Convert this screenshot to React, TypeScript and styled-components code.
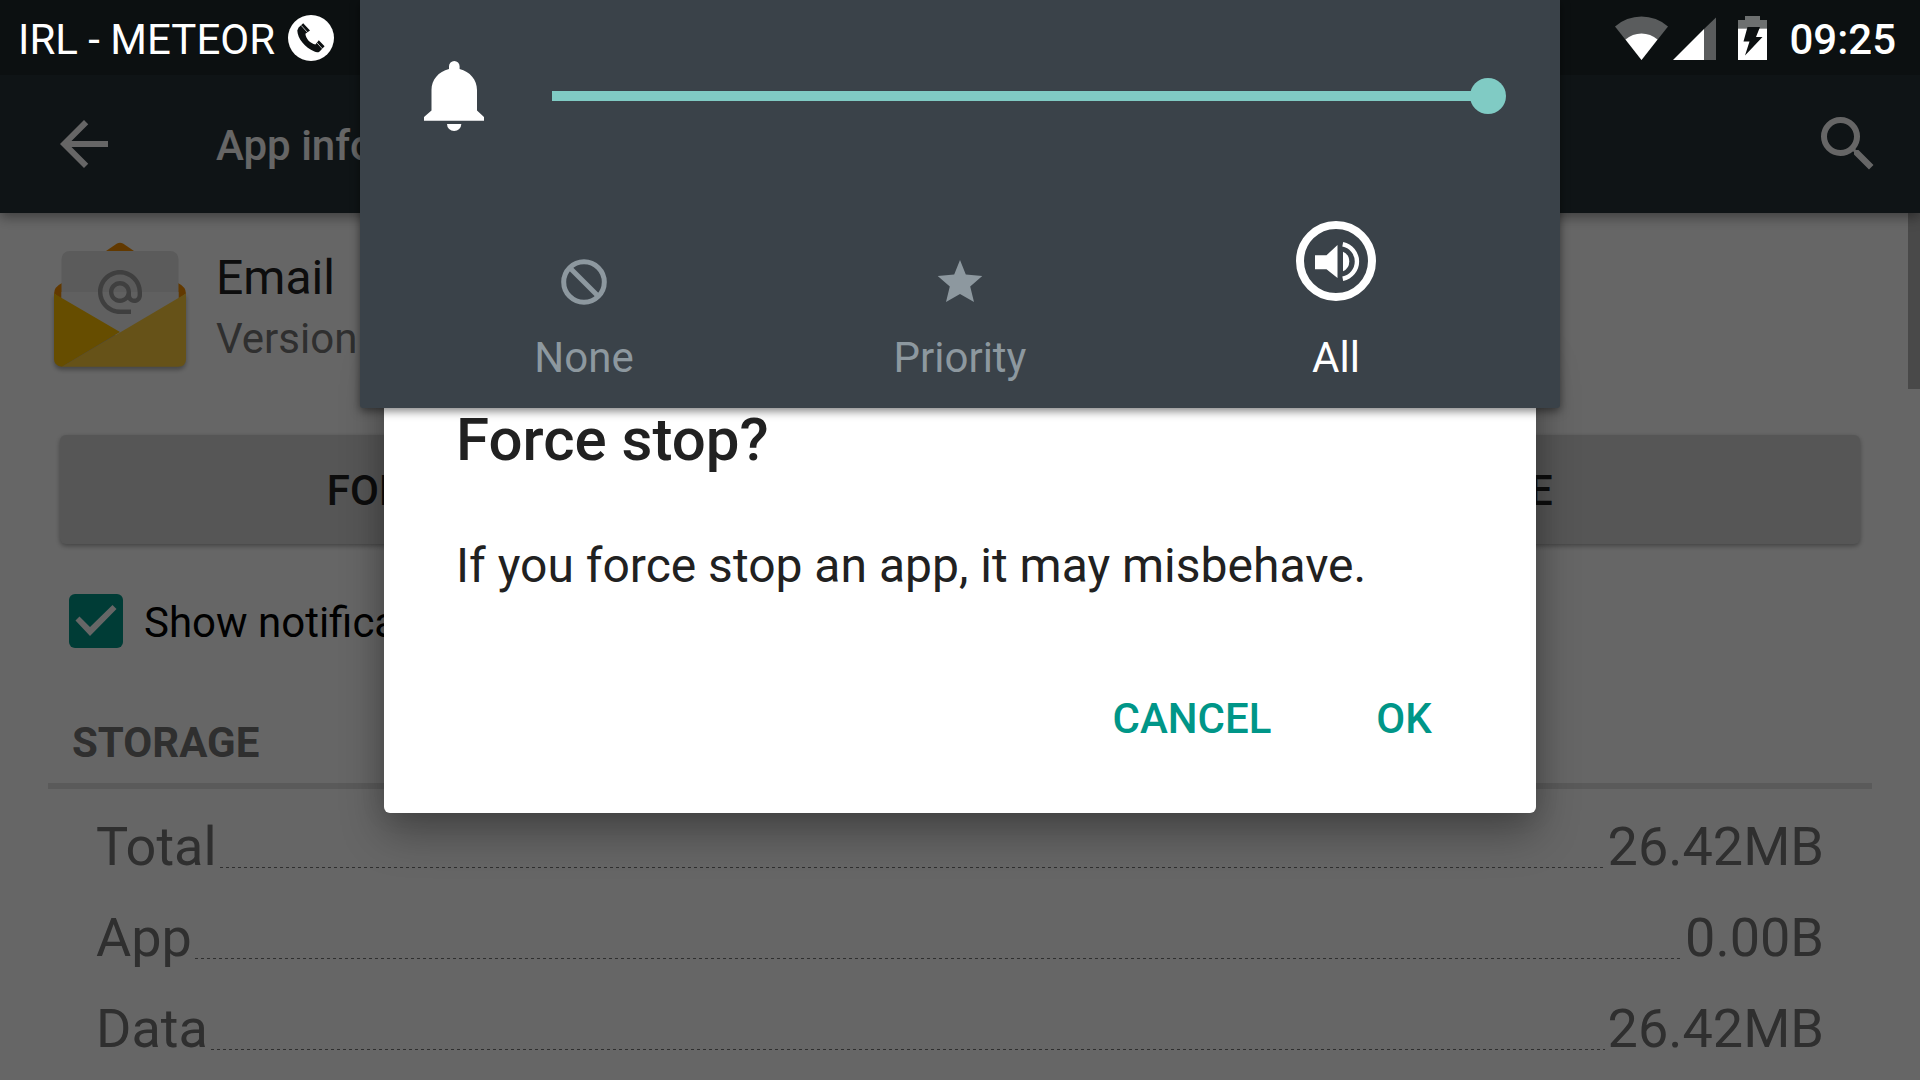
import React, { useState } from 'react';
import styled, { createGlobalStyle } from 'styled-components';

const GlobalStyle = createGlobalStyle`
  *, *::before, *::after { box-sizing: border-box; }
  body {
    margin: 0;
    background: #fff;
    color: #212121;
    font-family: Roboto, "Noto Sans", sans-serif;
    font-size: 42px;
    line-height: 49px;
  }
  button, input { font: inherit; color: inherit; margin: 0; }
  h1, h2, p, dl, dt, dd { margin: 0; font: inherit; }
  svg { display: block; flex: none; overflow: visible; }
`;

const Screen = styled.div`
  position: relative;
  height: 100vh;
  overflow: hidden;
  display: flex;
  flex-direction: column;
`;

/* status bar */

const StatusBar = styled.header`
  position: relative;
  z-index: 2;
  flex: none;
  height: 75px;
  padding: 0 24px 0 18px;
  display: flex;
  align-items: center;
  justify-content: space-between;
  background: #0c1011;
  color: #fff;
`;

const StatusGroup = styled.div<{ $gap: number }>`
  display: flex;
  align-items: center;
  gap: ${(p) => p.$gap}px;
`;

const StatusText = styled.span<{ $weight?: number }>`
  padding-top: 3px;
  font-weight: ${(p) => p.$weight ?? 400};
`;

/* app info page */

const AppBar = styled.nav`
  position: relative;
  flex: none;
  height: 138px;
  padding: 0 36px 0 48px;
  display: flex;
  align-items: center;
  background: #263238;
  color: #fff;
  box-shadow: 0 4px 12px rgba(0, 0, 0, 0.4);
  z-index: 1;
`;

const IconButton = styled.button`
  padding: 0;
  border: 0;
  background: none;
`;

const BarTitle = styled.h1`
  flex: 1;
  margin-left: 96px;
  padding-top: 2px;
  font-weight: 500;
`;

const Page = styled.main`
  position: relative;
  flex: 1;
  padding: 21px 48px 0;
`;

const ScrollThumb = styled.div`
  position: absolute;
  top: 0;
  right: 0;
  width: 12px;
  height: 176px;
  background: #b6b6b6;
`;

const AppHeader = styled.section`
  display: flex;
  align-items: center;
  gap: 24px;
`;

const AppText = styled.div`
  display: flex;
  flex-direction: column;
  gap: 8px;
`;

const AppName = styled.h2`
  font-size: 48px;
  line-height: 56px;
`;

const Muted = styled.p`
  color: #757575;
`;

const ButtonRow = styled.div`
  display: flex;
  gap: 240px;
  margin: 57px 12px 0;
`;

const RaisedButton = styled.button`
  flex: 1;
  height: 109px;
  padding: 2px 24px 0;
  border: 0;
  border-radius: 6px;
  background: #d6d7d7;
  font-weight: 500;
  text-transform: uppercase;
  box-shadow: 0 2px 5px rgba(0, 0, 0, 0.35);
`;

const CheckRow = styled.label`
  display: flex;
  align-items: center;
  gap: 21px;
  width: max-content;
  margin: 50px 0 0 21px;
  color: #000;
`;

const CheckText = styled.span`
  padding-top: 2px;
`;

const CheckHolder = styled.span`
  display: grid;
  & > * { grid-area: 1 / 1; }
  & > svg { pointer-events: none; }
`;

const CheckBox = styled.input`
  appearance: none;
  width: 54px;
  height: 54px;
  border: 6px solid #757575;
  border-radius: 6px;
  &:checked { border: 0; background: #009688; }
`;

const SectionTitle = styled.h2`
  margin-top: 70px;
  padding: 0 24px 16px;
  border-bottom: 6px solid #e0e0e0;
  color: #757575;
  font-weight: 700;
  text-transform: uppercase;
`;

const SizeList = styled.dl`
  display: flex;
  flex-direction: column;
  gap: 28px;
  padding: 26px 48px 28px;
  color: #757575;
  font-size: 54px;
  line-height: 63px;
`;

const SizeRow = styled.div`
  display: flex;
  gap: 3px;
`;

const SizeName = styled.dt`
  flex: 1;
  display: flex;
  align-items: flex-end;
  gap: 3px;
  &::after {
    content: '';
    flex: 1;
    height: 1px;
    margin-bottom: 10px;
    background: repeating-linear-gradient(90deg, #757575 0 3px, transparent 3px 6px);
  }
`;

/* dialog */

const Scrim = styled.div`
  position: absolute;
  inset: 75px 0 0;
  z-index: 1;
  display: grid;
  place-items: center;
  background: rgba(0, 0, 0, 0.6);
`;

const Dialog = styled.section`
  width: 60%;
  padding-top: 63px;
  border-radius: 6px;
  background: #fff;
  box-shadow: 0 20px 44px rgba(0, 0, 0, 0.32), 0 0 24px rgba(0, 0, 0, 0.12);
`;

const DialogTitle = styled.h2`
  padding: 0 72px;
  font-size: 60px;
  font-weight: 500;
  line-height: 70px;
`;

const DialogMessage = styled.p`
  padding: 63px 72px 52px;
  font-size: 48px;
  line-height: 56px;
`;

const DialogActions = styled.div`
  display: flex;
  justify-content: flex-end;
  padding: 0 26px 23px;
`;

const FlatButton = styled.button`
  min-width: 212px;
  height: 144px;
  padding: 0 24px;
  border: 0;
  background: none;
  color: #009688;
  font-weight: 500;
  text-transform: uppercase;
`;

/* volume panel */

const VolumePanel = styled.section`
  position: absolute;
  z-index: 3;
  top: 0;
  left: 0;
  right: 0;
  width: 62.5%;
  margin: 0 auto;
  padding: 60px 0 26px;
  border-radius: 0 0 3px 3px;
  background: #3a4249;
  color: #fff;
  box-shadow: 0 3px 10px rgba(0, 0, 0, 0.5);
`;

const SliderRow = styled.div`
  display: flex;
  align-items: center;
  gap: 68px;
  padding: 0 54px 0 64px;
`;

const Slider = styled.input`
  appearance: none;
  flex: 1;
  min-width: 0;
  height: 36px;
  background: linear-gradient(#80cbc4, #80cbc4) left center / calc(100% - 18px) 10px no-repeat;
  &::-webkit-slider-thumb {
    appearance: none;
    width: 36px;
    height: 36px;
    border-radius: 50%;
    background: #80cbc4;
  }
`;

const ModeRow = styled.div`
  display: grid;
  grid-template-columns: repeat(3, 1fr);
  padding: 89px 36px 0;
`;

const ModeButton = styled.button<{ $active: boolean }>`
  display: flex;
  flex-direction: column;
  align-items: center;
  gap: 32px;
  padding: 0;
  border: 0;
  background: none;
  color: ${(p) => (p.$active ? '#fff' : '#8d989f')};
`;

const PhoneIcon = () => (
  <svg width="48" height="48" viewBox="0 0 48 48" aria-hidden="true">
    <circle cx="24" cy="24" r="23" fill="#fff" />
    <path
      fill="#0c1011"
      d="M10.3 16.5 11.6 13.6 16.2 9.2 23 16.6 18.4 19.8C18.6 24.6 23.4 29.8 28.4 30.4L31.8 26.2 37.6 32.2 32.6 37.4C31.4 38.6 29.4 38.6 27.4 37.6 18 33.6 10.6 24.6 10.3 16.5Z"
    />
    <path stroke="#fff" strokeWidth="0.7" fill="none" d="m14.2 11.4 6.2 7M29.8 28.6l5.6 6.2" />
  </svg>
);

const WifiIcon = () => (
  <svg width="53" height="44" viewBox="0 0 53 44" fill="#fff" aria-hidden="true">
    <path opacity="0.32" d="M0 10.5A40 40 0 0 1 53 10.5L26.5 44Z" />
    <path d="M10.5 23.5A24 24 0 0 1 42.5 23.5L26.5 44Z" />
  </svg>
);

const SignalIcon = () => (
  <svg width="43" height="44" viewBox="0 0 43 44" fill="#fff" aria-hidden="true">
    <path opacity="0.32" d="M31 13 43 1.5V44H31Z" />
    <path d="M0 44 31 13V44Z" />
  </svg>
);

const BatteryIcon = () => (
  <svg width="29" height="44" viewBox="0 0 29 44" aria-hidden="true">
    <path fill="#6d7070" d="M7 0h15v4h7v8.500H0V4h7Z" />
    <path fill="#fff" d="M0 12.500h29V44H0Z" />
    <path fill="#0c1011" d="M9.500 11h12.500l-4 10h6.500L7 39.500l4.500-14H5.500Z" />
  </svg>
);

const BackIcon = () => (
  <svg width="72" height="72" viewBox="0 0 24 24" fill="currentColor" aria-hidden="true">
    <path d="M20 11H7.830l5.590-5.590L12 4l-8 8 8 8 1.410-1.410L7.830 13H20v-2z" />
  </svg>
);

const SearchIcon = () => (
  <svg width="72" height="72" viewBox="0 0 24 24" fill="currentColor" aria-hidden="true">
    <path d="M15.500 14h-.79l-.28-.27A6.471 6.471 0 0 0 16 9.500 6.500 6.500 0 1 0 9.500 16c1.610 0 3.090-.59 4.230-1.570l.27.28v.79l5 4.990L20.490 19l-4.990-5zm-6 0C7.010 14 5 11.990 5 9.500S7.010 5 9.500 5 14 7.010 14 9.500 11.990 14 9.500 14z" />
  </svg>
);

const EmailIcon = () => (
  <svg width="144" height="144" viewBox="0 0 144 144" aria-hidden="true">
    <path fill="rgba(0,0,0,.3)" d="M6 62h132v66a8 8 0 0 1-8 8H14a8 8 0 0 1-8-8Z" style={{ filter: 'blur(2px)' }} />
    <path fill="#f59000" d="M58 17 69 9.500Q72 7.800 75 9.500L86 17Z" />
    <path fill="#f59000" d="M14 49Q6 53 6 59.500L20 70H124L138 59.500Q138 53 130 49Z" />
    <path fill="#e4e4e4" d="M13.500 70V25a8 8 0 0 1 8-8H122.500a8 8 0 0 1 8 8V70L72 104Z" />
    <path fill="#f0f0f0" d="M13.500 58H130.500V70L72 104 13.500 70Z" />
    <path
      fill="#9e9e9e"
      transform="translate(45.600 31.700) scale(2.200)"
      d="M12 1.950c-5.520 0-10 4.480-10 10s4.480 10 10 10h5v-2h-5c-4.340 0-8-3.660-8-8s3.660-8 8-8 8 3.660 8 8v1.430c0 .79-.71 1.570-1.500 1.570s-1.500-.78-1.500-1.570v-1.430c0-2.760-2.240-5-5-5s-5 2.240-5 5 2.240 5 5 5c1.380 0 2.640-.56 3.540-1.470.65.890 1.770 1.470 2.960 1.470 1.970 0 3.500-1.600 3.500-3.570v-1.430c0-5.520-4.480-10-10-10zm0 13c-1.660 0-3-1.340-3-3s1.340-3 3-3 3 1.340 3 3-1.340 3-3 3z"
    />
    <path fill="#ffc000" d="M6 59.500 72 98 14 132.700Q6 132 6 125Z" />
    <path fill="#ffcd3c" d="M138 59.500V125Q138 132.700 130 132.700H14Z" />
  </svg>
);

const TickIcon = () => (
  <svg width="54" height="54" viewBox="0 0 54 54" fill="#fff" aria-hidden="true">
    <path d="M6.500 26.500 10.500 22.500 21 33 43.500 11 47.500 15 21 42Z" />
  </svg>
);

const BellIcon = () => (
  <svg width="60" height="72" viewBox="0 0 60 72" fill="#fff" aria-hidden="true">
    <path d="M25 9V6.300a5.300 5.300 0 0 1 10.600 0V9C46 11.500 53 20 53 30V50.500L60 57V60.700H0V57L7.500 50.500V30C7.500 20 14.500 11.500 25 9Z" />
    <path d="M23 64H37.300A7.150 7 0 0 1 23 64Z" />
  </svg>
);

const NoneIcon = () => (
  <svg width="80" height="80" viewBox="0 0 80 80" fill="none" stroke="currentColor" strokeWidth="5" aria-hidden="true">
    <circle cx="40" cy="61" r="20.300" />
    <path d="M26 47 54 75" />
  </svg>
);

const StarIcon = () => (
  <svg width="80" height="80" viewBox="0 0 80 80" fill="currentColor" aria-hidden="true">
    <path d="M40 39 45.800 53.500 62.300 55 50.200 65.500 54 81 40 73 26 81 29.800 65.500 17.700 55 34.200 53.500Z" />
  </svg>
);

const AllIcon = () => (
  <svg width="80" height="80" viewBox="0 0 80 80" fill="currentColor" aria-hidden="true">
    <circle cx="40" cy="40" r="36" fill="none" stroke="currentColor" strokeWidth="8" />
    <path d="M19 34.300H30.500L41.500 24V57L30.500 48.300H19Z" />
    <path d="M47 30.700A10.800 10.800 0 0 1 47 50.300Z" />
    <path d="M47.200 21A19.900 19.900 0 0 1 47.200 60L46.300 55.500A15.200 15.200 0 0 0 46.300 25.600Z" />
  </svg>
);

const modes = [
  { label: 'None', Icon: NoneIcon },
  { label: 'Priority', Icon: StarIcon },
  { label: 'All', Icon: AllIcon },
];

const sizes = [
  { name: 'Total', value: '26.42MB' },
  { name: 'App', value: '0.00B' },
  { name: 'Data', value: '26.42MB' },
];

export default function App() {
  const [mode, setMode] = useState('All');

  return (
    <>
      <GlobalStyle />
      <Screen>
        <StatusBar>
          <StatusGroup $gap={12}>
            <StatusText>IRL - METEOR</StatusText>
            <PhoneIcon />
          </StatusGroup>
          <StatusGroup $gap={22}>
            <StatusGroup $gap={5}>
              <WifiIcon />
              <SignalIcon />
            </StatusGroup>
            <BatteryIcon />
            <StatusText $weight={500}>09:25</StatusText>
          </StatusGroup>
        </StatusBar>

        <AppBar>
          <IconButton type="button" aria-label="Back"><BackIcon /></IconButton>
          <BarTitle>App info</BarTitle>
          <IconButton type="button" aria-label="Search"><SearchIcon /></IconButton>
        </AppBar>

        <Page>
          <ScrollThumb />
          <AppHeader>
            <EmailIcon />
            <AppText>
              <AppName>Email</AppName>
              <Muted>Version</Muted>
            </AppText>
          </AppHeader>

          <ButtonRow>
            <RaisedButton type="button">Force stop</RaisedButton>
            <RaisedButton type="button">Disable</RaisedButton>
          </ButtonRow>

          <CheckRow>
            <CheckHolder>
              <CheckBox type="checkbox" defaultChecked />
              <TickIcon />
            </CheckHolder>
            <CheckText>Show notifications</CheckText>
          </CheckRow>

          <SectionTitle>Storage</SectionTitle>
          <SizeList>
            {sizes.map((s) => (
              <SizeRow key={s.name}>
                <SizeName>{s.name}</SizeName>
                <dd>{s.value}</dd>
              </SizeRow>
            ))}
          </SizeList>
        </Page>

        <Scrim>
          <Dialog role="dialog" aria-labelledby="dialog-title">
            <DialogTitle id="dialog-title">Force stop?</DialogTitle>
            <DialogMessage>If you force stop an app, it may misbehave.</DialogMessage>
            <DialogActions>
              <FlatButton type="button">Cancel</FlatButton>
              <FlatButton type="button">OK</FlatButton>
            </DialogActions>
          </Dialog>
        </Scrim>

        <VolumePanel aria-label="Volume">
          <SliderRow>
            <BellIcon />
            <Slider type="range" min="0" max="7" defaultValue="7" aria-label="Ring volume" />
          </SliderRow>
          <ModeRow>
            {modes.map(({ label, Icon }) => (
              <ModeButton
                key={label}
                type="button"
                $active={mode === label}
                aria-pressed={mode === label}
                onClick={() => setMode(label)}
              >
                <Icon />
                {label}
              </ModeButton>
            ))}
          </ModeRow>
        </VolumePanel>
      </Screen>
    </>
  );
}
